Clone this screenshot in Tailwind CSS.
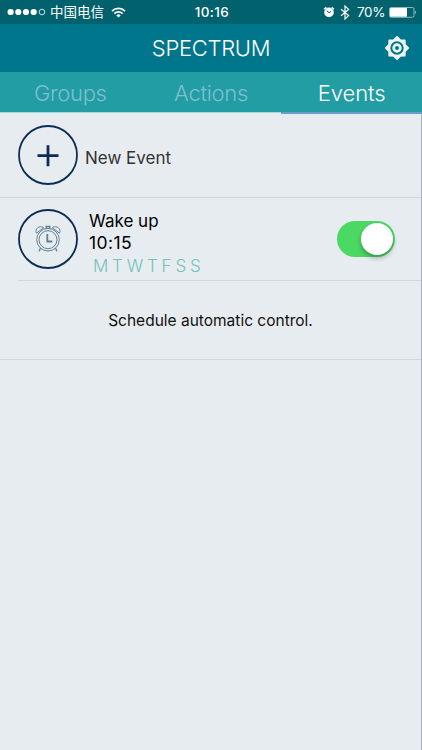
<!DOCTYPE html>
<html lang="en">
<head>
<meta charset="utf-8">
<meta name="viewport" content="width=device-width, initial-scale=1">
<title>Spectrum</title>
<script src="https://cdn.jsdelivr.net/npm/@tailwindcss/browser@4"></script>
</head>
<body class="h-[750px] w-[422px] overflow-hidden bg-[#e7ecf0] font-[Inter,'Noto_Sans_CJK_SC',sans-serif] text-black">
<div class="flex h-full flex-col border-r border-[#a9b3b9]">
  <header class="-mr-px shrink-0 text-white">
    <div class="grid h-6 grid-cols-3 items-center bg-[#01626d]">
      <div class="flex items-center pl-[7px]">
        <svg class="h-[8px] w-[40px] shrink-0" viewBox="0 0 40 8" fill="#fff">
          <circle cx="3.6" cy="4" r="3.1"/><circle cx="11.3" cy="4" r="3.1"/><circle cx="19" cy="4" r="3.1"/><circle cx="26.7" cy="4" r="3.1"/>
          <circle cx="35" cy="4" r="2.8" fill="none" stroke="#fff" stroke-width=".8"/>
        </svg>
        <span class="ml-[3px] pb-px font-['Noto_Sans_CJK_SC',sans-serif] text-[13.5px] leading-[21px] whitespace-nowrap">中国电信</span>
        <svg class="ml-[7px] h-[11px] w-[15px] shrink-0" viewBox="0 0 15 11" fill="none" stroke="#fff" stroke-width="1.7">
          <path d="M1 4.1a9.2 9.2 0 0 1 13 0M3.4 6.6a5.8 5.8 0 0 1 8.2 0"/>
          <path d="M7.5 10.6 5.3 8.4a3.1 3.1 0 0 1 4.4 0z" fill="#fff" stroke="none"/>
        </svg>
      </div>
      <div class="pt-px pl-[2px] text-center text-[13.5px] font-medium tracking-[0.4px]">10:16</div>
      <div class="flex items-center justify-end pr-[5px]">
        <svg class="h-[12px] w-[12px]" viewBox="0 0 12 12">
          <circle cx="6" cy="6.4" r="4.8" fill="#fff"/>
          <path d="M1 3.3 3.3 1.2M11 3.3 8.7 1.2" stroke="#fff" stroke-width="1.3"/>
          <path d="M3.8 4.7 6 6.7l2.1-1.2" fill="none" stroke="#01626d" stroke-width="1"/>
        </svg>
        <svg class="ml-[5px] h-[15px] w-[10px]" viewBox="0 0 10 15" fill="none" stroke="#fff" stroke-width="1.2">
          <path d="M1 4.2 8.6 10.6 5 14V1l3.6 3.4L1 10.8"/>
        </svg>
        <span class="ml-[7px] text-[13.5px] leading-6 tracking-[-0.4px]">70%</span>
        <svg class="ml-[4px] h-[11px] w-[28px]" viewBox="0 0 28 11">
          <rect x=".5" y=".5" width="24.5" height="9.8" rx="1.6" fill="none" stroke="#b5d1d5" stroke-width=".8"/>
          <rect x="1" y="1" width="17" height="8.8" rx=".8" fill="#fff"/>
          <path d="M26 3.5q1.7 1.8 0 3.6z" fill="#d5e6e8"/>
        </svg>
      </div>
    </div>
    <div class="grid h-12 grid-cols-[1fr_auto_1fr] items-center bg-[#00768c]">
      <h1 class="col-start-2 text-[22px] leading-6 font-[350] tracking-[-0.3px]">SPECTRUM</h1>
      <button class="justify-self-end pr-[12px]" aria-label="Settings">
        <svg class="h-[26px] w-[26px]" viewBox="-13 -13 26 26" fill="none" stroke="#eef4f6" stroke-linejoin="round">
          <path d="M0-11 3.2-7.8 7.6-7.6 7.8-3.2 11 0 7.8 3.2 7.6 7.6 3.2 7.8 0 11-3.2 7.8-7.6 7.6-7.8 3.2-11 0-7.8-3.2-7.6-7.6-3.2-7.8Z" fill="#eef4f6" stroke-width="2"/>
          <circle r="5.7" stroke="#00768c" stroke-width="2"/>
          <circle r="2" fill="#00768c" stroke="none"/>
        </svg>
      </button>
    </div>
    <nav class="grid h-[41px] grid-cols-3 bg-[#229da4] text-center text-[22px] leading-[42px] font-[350]">
      <a class="h-[41px] border-b border-[#a5dadd] tracking-[-0.3px] text-[#7fbfce]">Groups</a>
      <a class="h-[41px] border-b border-[#a5dadd] tracking-[-0.3px] text-[#7fbfce]">Actions</a>
      <a class="relative h-[41px] tracking-[-0.1px]">Events<span class="absolute inset-x-0 -bottom-px h-[2px] bg-[#6d9bc8]"></span></a>
    </nav>
  </header>
  <main class="text-[17px]">
    <div class="flex h-[85px] items-center border-b border-[#d2d6dc] pl-[18px]">
      <svg class="mb-px h-[60px] w-[60px]" viewBox="0 0 60 60" fill="none" stroke="#0c2c54">
        <circle cx="30" cy="30" r="29" stroke-width="1.8"/>
        <path d="M19.5 30.7h21M30 20.2v21" stroke-width="2.8"/>
      </svg>
      <span class="ml-[7px] pt-[7px] text-[#333]">New Event</span>
    </div>
    <div class="ml-[18px] flex h-[83px] items-center border-b border-[#d2d6dc]">
      <svg class="h-[60px] w-[60px]" viewBox="0 0 60 60" fill="none" stroke="#5e8197" stroke-width="1">
        <circle cx="30" cy="30" r="29" stroke="#0c2c54" stroke-width="1.8"/>
        <circle cx="30" cy="30.7" r="11.3"/><circle cx="30" cy="30.7" r="9"/>
        <path d="M18.5 24.2c-2.3-4.2 3-8.5 7.2-5.5zM41.5 24.2c2.3-4.2-3-8.5-7.2-5.5z"/>
        <path d="M28.2 17.4h3.6v2h-3.6zM22.5 39.3l-1.5 3M37.5 39.3l1.5 3" stroke-width="1.4"/>
        <path d="M29.3 25v7.5h5" stroke-width="1.8"/>
      </svg>
      <div class="ml-[11px] pt-[9px] leading-[22.5px]">
        <div>Wake up</div>
        <div class="text-[17.5px] font-[380] tracking-[0.4px]">10:15</div>
        <div class="ml-[4px] flex gap-[3.8px] font-[350] text-[#75c2b9]"><span>M</span><span>T</span><span>W</span><span>T</span><span>F</span><span>S</span><span>S</span></div>
      </div>
      <button class="mr-[26px] ml-auto flex h-[36px] w-[58px] items-center justify-end rounded-full bg-[#4bd964] pr-[2px]" aria-label="Wake up enabled">
        <span class="size-[32px] rounded-full bg-white shadow-[0_3px_5px_rgba(0,0,0,0.3)]"></span>
      </button>
    </div>
    <p class="flex h-[79px] items-center justify-center border-b border-[#d2d6dc] pt-[2px] text-[15.5px] text-[#111]">Schedule automatic control.</p>
  </main>
</div>
</body>
</html>
